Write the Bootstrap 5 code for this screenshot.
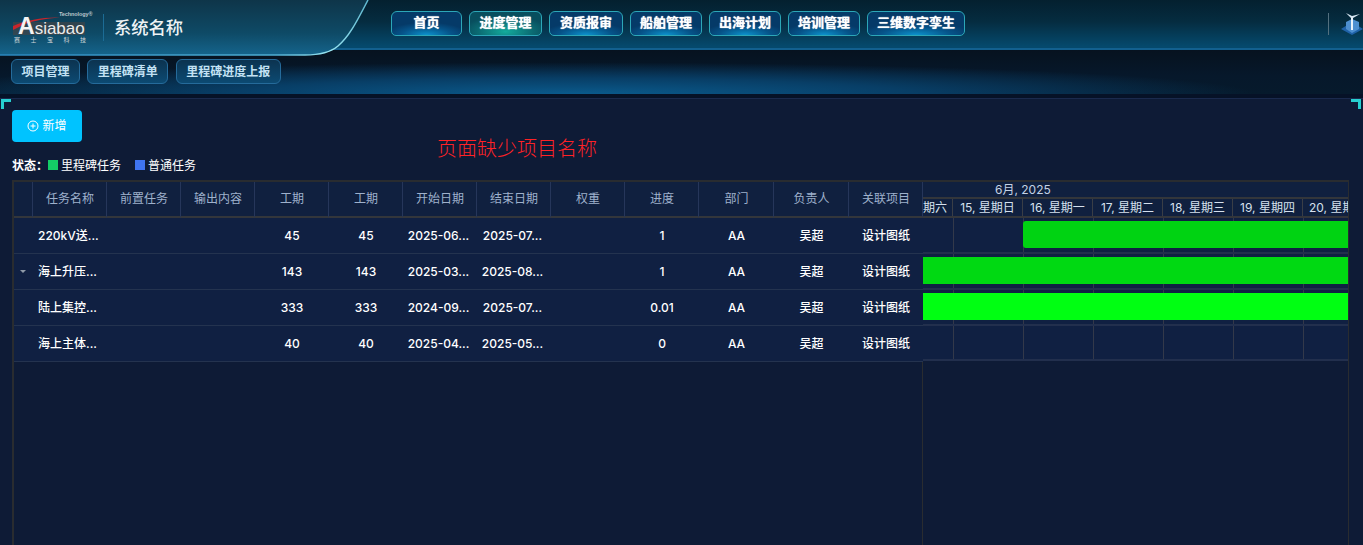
<!DOCTYPE html>
<html lang="zh">
<head>
<meta charset="utf-8">
<title>系统名称</title>
<link rel="stylesheet" href="https://cdn.jsdelivr.net/npm/bootstrap@5.3.0/dist/css/bootstrap.min.css">
<style>
html,body{height:545px;overflow:hidden;}
body{background:#0e1b36;color:#fff;font-family:Inter,"Noto Sans CJK SC",sans-serif;font-size:13px;}
.topbar{height:50px;position:relative;background:linear-gradient(180deg,#04202f 0%,#052c40 45%,#05496c 96%);border-bottom:2px solid #12608f;}
.brandshape{position:absolute;left:0;top:0;width:372px;height:56px;z-index:1;}
.brandbox{position:relative;z-index:2;width:372px;height:48px;padding-left:13px;}
.logobox{position:relative;width:76px;height:44px;flex:none;}
.logobox svg{position:absolute;left:0;top:0;}
.logoword{position:absolute;left:5px;top:18px;font:400 17px/16px "Liberation Sans",sans-serif;color:#ececec;white-space:nowrap;}
.logoinitial{font-size:23px;font-weight:700;color:#f4f4f4;}
.logotech{position:absolute;left:46px;top:11.500px;font:700 5.500px/1 "Liberation Sans",sans-serif;letter-spacing:-.1px;color:#b9c5cb;white-space:nowrap;}
.logocn{position:absolute;left:1px;top:37px;width:72px;font:400 6px/1 "Noto Sans CJK SC",sans-serif;color:#cfd6da;display:flex;justify-content:space-between;}
.brandsep{width:1px;height:27px;background:#1c6c95;margin:14px 10px 0 14px;}
.sysname{font-size:17.300px;font-weight:500;color:#eef3f5;margin-top:10px;line-height:34px;font-family:"Noto Sans CJK SC",sans-serif;}
.mainnav{position:absolute;left:391px;top:11px;z-index:2;gap:7px;}
.navchip{height:25px;padding:0;border:1px solid #2ca7b8;border-radius:6px 6px 5px 5px;color:#fff;font:700 13px/20px "Noto Sans CJK SC",sans-serif;text-align:center;background:radial-gradient(ellipse 60% 55% at 50% 100%,#0c92cc 0%,#06548a 60%,#053a68 100%);text-shadow:0 0 1px #fff;}
.navchip.isactive{background:radial-gradient(ellipse 60% 70% at 50% 85%,#14ab9c 0%,#0b6a72 65%,#084e5e 100%);}
.topright{position:absolute;left:1328px;top:12px;height:24px;z-index:2;}
.toprule{width:1px;height:22px;background:#53707f;margin-right:12px;flex:none;}
.subbar{height:44px;background:radial-gradient(ellipse 50% 72% at 42% 100%,#0a5a8c 0%,#083e66 50%,rgba(6,24,43,0) 100%),linear-gradient(180deg,#06121f 0%,#06182b 60%,#061a2c 100%);padding:9px 0 0 11px;gap:7.300px;}
.subchip{height:25px;padding:0 9.500px;border:1px solid #256b9b;border-radius:6px;color:#c3e2f4;font:700 12px/21px "Noto Sans CJK SC",sans-serif;background:linear-gradient(180deg,#0c3350,#0c4a72);}
.stripdark{height:4px;background:#061227;}
.workarea{position:relative;height:447px;border-top:1px solid #1a2a4d;padding:11px 14px 0 12px;}
.cornermark{position:absolute;top:0;width:10px;height:10px;border-top:3px solid #27cfd0;}
.cornermark.cl{left:1px;border-left:3px solid #27cfd0;}
.cornermark.cr{right:2px;border-right:3px solid #27cfd0;}
.addbtn{width:70px;height:32px;padding:0;border:0;border-radius:4px;background:#00c3ff;color:#fff;font-size:12px;display:flex;align-items:center;justify-content:center;gap:3px;}
.addbtn:hover{background:#00c3ff;color:#fff;}
.warnmsg{position:absolute;left:437px;top:35px;color:#ff2226;font-size:20px;font-weight:300;line-height:28px;font-family:"Noto Sans CJK SC",sans-serif;}
.legendrow{height:20px;margin-top:13px;font-size:12px;line-height:20px;font-family:"Noto Sans CJK SC",sans-serif;}
.legendrow b{font-weight:700;}
.swatch{width:10px;height:10px;margin-right:3px;display:inline-block;}
.legendgap{margin-right:14px;}
.gantwrap{margin-top:5px;height:365px;border:2px solid #292c30;border-bottom:0;border-right:1px solid #292c30;width:1337px;}
.tablepane{width:909px;flex:none;border-right:1px solid #292c30;}
.tgrid{display:grid;grid-template-columns:19px repeat(9,74px) 75px 75px 74px;}
.hcell{height:36px;background:#10203f;color:#9fb1cc;font-size:12px;display:flex;align-items:center;justify-content:center;padding-left:1px;border-right:1px solid #26365a;border-bottom:2px solid #33363b;}
.hcell:last-child{border-right:0;}
.bcell{height:36px;background:#102042;color:#fff;font-size:12px;font-weight:450;display:flex;align-items:center;justify-content:center;border-bottom:1px solid #24334f;white-space:nowrap;}
.bcell.leftname{justify-content:flex-start;padding-left:5px;}
.bcell.datecell{padding-right:3px;}
.caret{width:0;height:0;border-left:3px solid transparent;border-right:3px solid transparent;border-top:3px solid #8f9aa8;margin-left:6px;margin-top:-1px;}
.chartpane{flex:1;min-width:0;overflow:hidden;position:relative;}
.monthrow{height:17px;background:#10203f;border-bottom:2px solid #33363b;font-size:12px;line-height:15px;color:#c4d2e4;padding-left:72px;}
.dayrow{height:19px;background:#10203f;border-bottom:2px solid #33363b;white-space:nowrap;display:flex;}
.daycell{width:70px;flex:none;font-size:12px;line-height:18px;text-align:center;color:#d5e0ee;border-right:1px solid #3a3e46;overflow:hidden;}
.daycell.firstday{width:30px;text-align:right;padding-right:6px;}
.daycell.lastday{text-align:left;padding-left:6px;border-right:0;width:46px;}
.chartrow{height:36px;display:flex;background:#102042;border-bottom:2px solid #222f4d;}
.chartcol{width:70px;flex:none;border-right:1px solid #33394a;}
.chartcol.firstcol{width:31px;}
.chartrow.lastrow{height:35px;}
.barfill{height:27px;position:absolute;right:0;}
</style>
</head>
<body>
<header class="topbar">
  <svg class="brandshape" viewBox="0 0 372 56" preserveAspectRatio="none" aria-hidden="true">
    <defs>
      <linearGradient id="panelfill" x1="0" y1="0" x2="0" y2="1">
        <stop offset="0" stop-color="#0e3549"/><stop offset=".6" stop-color="#0e4a66"/><stop offset="1" stop-color="#15648c"/>
      </linearGradient>
      <linearGradient id="edgeline" x1="0" y1="0" x2="1" y2="0">
        <stop offset="0" stop-color="#2a86bd"/><stop offset=".75" stop-color="#4faed3"/><stop offset=".9" stop-color="#9be6f2"/><stop offset="1" stop-color="#5fb8d0"/>
      </linearGradient>
    </defs>
    <path d="M0 0H368C358 19 350 36 338 46C331 52 322 55 305 55H0Z" fill="url(#panelfill)"/>
    <path d="M368 0C358 19 350 36 338 46C331 52 322 55 305 55H0" fill="none" stroke="url(#edgeline)" stroke-width="1.500"/>
  </svg>
  <div class="brandbox d-flex">
    <div class="logobox">
      <svg width="76" height="44" viewBox="0 0 76 44" aria-hidden="true">
        <rect x="0" y="22" width="72" height="13" fill="#4a4444" opacity=".6"/>
        <path d="M0 26C14 20 30 17 47 17.500C32 18.500 20 21 12 24L0 30Z" fill="#c9252b"/>
      </svg>
      <span class="logoword"><span class="logoinitial">A</span>siabao</span>
      <span class="logotech">Technology®</span>
      <span class="logocn"><span>赛</span><span>士</span><span>宝</span><span>科</span><span>技</span></span>
    </div>
    <div class="brandsep"></div>
    <div class="sysname">系统名称</div>
  </div>
  <nav class="mainnav d-flex">
    <a class="navchip text-decoration-none" style="width:71px">首页</a>
    <a class="navchip isactive text-decoration-none" style="width:73px">进度管理</a>
    <a class="navchip text-decoration-none" style="width:74px">资质报审</a>
    <a class="navchip text-decoration-none" style="width:72px">船舶管理</a>
    <a class="navchip text-decoration-none" style="width:72px">出海计划</a>
    <a class="navchip text-decoration-none" style="width:72px">培训管理</a>
    <a class="navchip text-decoration-none" style="width:98px">三维数字孪生</a>
  </nav>
  <div class="topright d-flex align-items-center">
    <div class="toprule"></div>
    <svg width="24" height="26" viewBox="0 0 24 26" aria-hidden="true">
      <path d="M11 11L22 18L11 24L0 18Z" fill="#1f62a8"/>
      <path d="M5 11L11 8L18 11V18L11 22L5 18Z" fill="#4d8fd0"/>
      <path d="M10 7H12V19H10Z" fill="#eaf3fb"/>
      <path d="M5 2L11 5L19 3L12 7H10Z" fill="#d8e8f4"/>
    </svg>
  </div>
</header>
<nav class="subbar d-flex">
  <a class="subchip text-decoration-none">项目管理</a>
  <a class="subchip text-decoration-none">里程碑清单</a>
  <a class="subchip text-decoration-none">里程碑进度上报</a>
</nav>
<div class="stripdark"></div>
<main class="workarea">
  <span class="cornermark cl"></span><span class="cornermark cr"></span>
  <button type="button" class="btn addbtn">
    <svg width="12" height="12" viewBox="0 0 12 12" fill="none" stroke="#fff" stroke-width="1" aria-hidden="true"><circle cx="6" cy="6" r="5"/><path d="M6 3.500V8.500M3.500 6H8.500"/></svg>
    新增
  </button>
  <div class="warnmsg">页面缺少项目名称</div>
  <div class="legendrow d-flex align-items-center">
    <b>状态：</b><span class="swatch" style="background:#14cc66"></span><span class="legendgap">里程碑任务</span>
    <span class="swatch" style="background:#3f74f0"></span><span>普通任务</span>
  </div>
  <div class="gantwrap d-flex">
    <div class="tablepane">
      <div class="tgrid">
        <div class="hcell"></div><div class="hcell">任务名称</div><div class="hcell">前置任务</div><div class="hcell">输出内容</div><div class="hcell">工期</div><div class="hcell">工期</div><div class="hcell">开始日期</div><div class="hcell">结束日期</div><div class="hcell">权重</div><div class="hcell">进度</div><div class="hcell">部门</div><div class="hcell">负责人</div><div class="hcell">关联项目</div>

        <div class="bcell"></div><div class="bcell leftname">220kV送...</div><div class="bcell"></div><div class="bcell"></div><div class="bcell">45</div><div class="bcell">45</div><div class="bcell datecell">2025-06...</div><div class="bcell datecell">2025-07...</div><div class="bcell"></div><div class="bcell">1</div><div class="bcell">AA</div><div class="bcell">吴超</div><div class="bcell">设计图纸</div>

        <div class="bcell justify-content-start"><span class="caret"></span></div><div class="bcell leftname">海上升压...</div><div class="bcell"></div><div class="bcell"></div><div class="bcell">143</div><div class="bcell">143</div><div class="bcell datecell">2025-03...</div><div class="bcell datecell">2025-08...</div><div class="bcell"></div><div class="bcell">1</div><div class="bcell">AA</div><div class="bcell">吴超</div><div class="bcell">设计图纸</div>

        <div class="bcell"></div><div class="bcell leftname">陆上集控...</div><div class="bcell"></div><div class="bcell"></div><div class="bcell">333</div><div class="bcell">333</div><div class="bcell datecell">2024-09...</div><div class="bcell datecell">2025-07...</div><div class="bcell"></div><div class="bcell">0.01</div><div class="bcell">AA</div><div class="bcell">吴超</div><div class="bcell">设计图纸</div>

        <div class="bcell"></div><div class="bcell leftname">海上主体...</div><div class="bcell"></div><div class="bcell"></div><div class="bcell">40</div><div class="bcell">40</div><div class="bcell datecell">2025-04...</div><div class="bcell datecell">2025-05...</div><div class="bcell"></div><div class="bcell">0</div><div class="bcell">AA</div><div class="bcell">吴超</div><div class="bcell">设计图纸</div>
      </div>
    </div>
    <div class="chartpane">
      <div class="monthrow">6月, 2025</div>
      <div class="dayrow">
        <div class="daycell firstday">期六</div><div class="daycell">15, 星期日</div><div class="daycell">16, 星期一</div><div class="daycell">17, 星期二</div><div class="daycell">18, 星期三</div><div class="daycell">19, 星期四</div><div class="daycell lastday">20, 星期</div>
      </div>
      <div class="chartrow"><div class="chartcol firstcol"></div><div class="chartcol"></div><div class="chartcol"></div><div class="chartcol"></div><div class="chartcol"></div><div class="chartcol"></div><div class="chartcol"></div></div>
      <div class="chartrow"><div class="chartcol firstcol"></div><div class="chartcol"></div><div class="chartcol"></div><div class="chartcol"></div><div class="chartcol"></div><div class="chartcol"></div><div class="chartcol"></div></div>
      <div class="chartrow"><div class="chartcol firstcol"></div><div class="chartcol"></div><div class="chartcol"></div><div class="chartcol"></div><div class="chartcol"></div><div class="chartcol"></div><div class="chartcol"></div></div>
      <div class="chartrow lastrow"><div class="chartcol firstcol"></div><div class="chartcol"></div><div class="chartcol"></div><div class="chartcol"></div><div class="chartcol"></div><div class="chartcol"></div><div class="chartcol"></div></div>
      <div class="barfill" style="top:39px;left:100px;background:#00d312;border-radius:3px 0 0 3px"></div>
      <div class="barfill" style="top:75px;left:0;background:#00d912"></div>
      <div class="barfill" style="top:111px;left:0;background:#00ff12"></div>
    </div>
  </div>
</main>
</body>
</html>
